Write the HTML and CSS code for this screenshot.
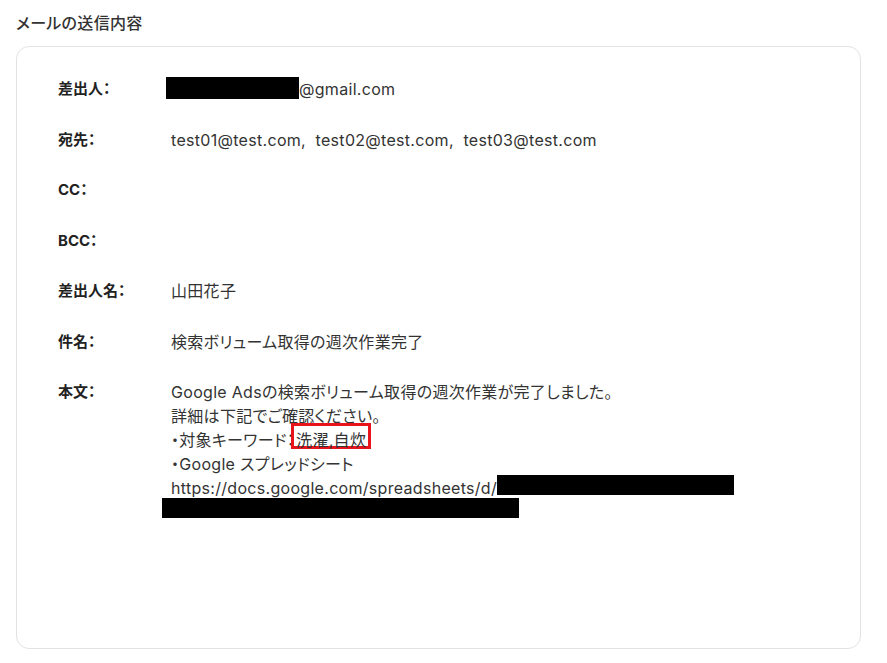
FILE: index.html
```html
<!DOCTYPE html>
<html lang="ja">
<head>
<meta charset="utf-8">
<link rel="stylesheet" href="styles.css">
</head>
<body>
<div class="page">
  <h2 class="title">メールの送信内容</h2>
  <div class="card">
    <div class="row">
      <div class="label">差出人：</div>
      <div class="value"><span class="redact r1"></span>@gmail.com</div>
    </div>
    <div class="row">
      <div class="label">宛先：</div>
      <div class="value">test01@test.com,&nbsp; test02@test.com,&nbsp; test03@test.com</div>
    </div>
    <div class="row">
      <div class="label">CC：</div>
      <div class="value"></div>
    </div>
    <div class="row">
      <div class="label">BCC：</div>
      <div class="value"></div>
    </div>
    <div class="row">
      <div class="label">差出人名：</div>
      <div class="value">山田花子</div>
    </div>
    <div class="row">
      <div class="label">件名：</div>
      <div class="value">検索ボリューム取得の週次作業完了</div>
    </div>
    <div class="row">
      <div class="label">本文：</div>
      <div class="value body">
        <div>Google Adsの検索ボリューム取得の週次作業が完了しました。</div>
        <div>詳細は下記でご確認ください。</div>
        <div>・対象キーワード：<span class="mark">洗濯,自炊</span></div>
        <div>・Google スプレッドシート</div>
        <div>https://docs.google.com/spreadsheets/d/<span class="redact r2"></span></div>
        <div><span class="redact r3"></span></div>
      </div>
    </div>
  </div>
</div>
</body>
</html>
```
FILE: styles.css
```css
html, body {
  margin: 0;
  padding: 0;
  background: #fff;
}
body {
  font-family: Inter, "Noto Sans CJK JP", sans-serif;
  font-feature-settings: "palt";
  color: #333;
}
.page {
  padding: 12px 16px 0 16px;
  width: 845px;
}
.title {
  margin: 0 0 12px 0;
  font-size: 16px;
  font-weight: 500;
  line-height: 22px;
  letter-spacing: 0.3px;
  color: #333;
}
.card {
  border: 1px solid #e2e2e2;
  border-radius: 13px;
  height: 571px;
  padding: 30px 41px 0 41px;
  box-sizing: content-box;
  width: 761px;
  display: flex;
  flex-direction: column;
  gap: 26.5px;
}
.row {
  display: flex;
  line-height: 24px;
}
.label {
  width: 113px;
  flex: none;
  font-size: 15px;
  font-weight: 700;
  color: #222;
}
.value {
  font-size: 16px;
  letter-spacing: 0.3px;
  min-height: 24px;
}
.redact {
  display: inline-block;
  background: #000;
  vertical-align: top;
}
.r1 {
  width: 133px;
  height: 22px;
  margin-left: -5px;
}
.r2 {
  width: 237px;
  height: 20px;
  margin-top: -1px;
}
.r3 {
  width: 357px;
  height: 20px;
  margin-left: -9px;
  margin-top: -2px;
}
.mark {
  position: relative;
  display: inline-block;
  vertical-align: top;
  box-sizing: border-box;
  height: 26px;
  margin-top: -5px;
  margin-left: -4px;
  padding: 0 2px;
  line-height: 28px;
  border: 3px solid #e8141c;
  background: #fff;
}
```
